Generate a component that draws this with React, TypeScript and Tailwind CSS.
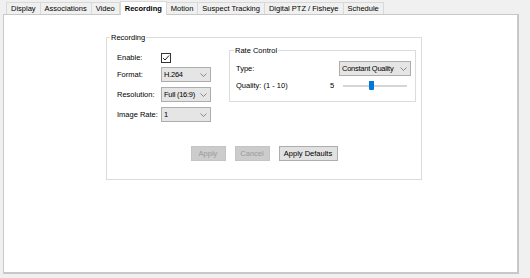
import React from "react";

const font = { fontFamily: '"Liberation Sans", Arial, sans-serif' };

function Tab({ label, active }: { label: string; active?: boolean }) {
  if (active) {
    return (
      <div className="relative z-10 -mb-px flex h-[14px] items-center whitespace-nowrap border border-b-0 border-[#d9d9d9] bg-white px-[4px] text-[7.5px] font-bold text-black">
        {label}
      </div>
    );
  }
  return (
    <div className="-ml-px flex h-[12px] items-center whitespace-nowrap border border-b-0 border-[#d9d9d9] bg-[#f0f0f0] px-[4px] text-[7.5px] text-black first:ml-0">
      {label}
    </div>
  );
}

function Select({ value, w }: { value: string; w: string }) {
  return (
    <div className={`flex h-[15px] items-center justify-between whitespace-nowrap border border-[#adadad] bg-[#e5e5e5] pl-[2px] pr-[3px] text-[7.5px] text-black ${w}`}>
      <span className="tracking-[-0.25px]">{value}</span>
      <svg width="7" height="4" viewBox="0 0 7 4" className="shrink-0">
        <path d="M0.5 0.5 L3.5 3.5 L6.5 0.5" fill="none" stroke="#707070" strokeWidth="0.8" />
      </svg>
    </div>
  );
}

function Row({ label, children }: { label: string; children: React.ReactNode }) {
  return (
    <div className="flex h-[15px] items-center">
      <div className="w-[44px] whitespace-nowrap text-[7.5px] text-black">{label}</div>
      {children}
    </div>
  );
}

function Button({ label, disabled, w }: { label: string; disabled?: boolean; w: string }) {
  return (
    <div
      className={`flex h-[15px] items-center justify-center whitespace-nowrap border text-[7.5px] ${w} ${
        disabled ? "border-[#c4c4c4] bg-[#cccccc] text-[#9a9a9a]" : "border-[#adadad] bg-[#e1e1e1] text-black"
      }`}
    >
      {label}
    </div>
  );
}

export default function App() {
  return (
    <div className="h-[278px] w-[530px] overflow-hidden bg-[#f0f0f0]" style={font}>
      <div className="flex h-[14px] items-end pl-[6px]">
        <Tab label="Display" />
        <Tab label="Associations" />
        <Tab label="Video" />
        <Tab label="Recording" active />
        <Tab label="Motion" />
        <Tab label="Suspect Tracking" />
        <Tab label="Digital PTZ / Fisheye" />
        <Tab label="Schedule" />
      </div>
      <div className="ml-[3px] h-[260px] w-[516px] border border-[#c8c8c8] border-b-2 border-r-2 bg-white pl-[102px] pt-[22px]">
        <div className="relative h-[143px] w-[316px] border border-[#dcdcdc]">
          <div className="absolute -top-[6px] left-[3px] bg-white px-[1px] text-[7.5px] text-black">Recording</div>
          <div className="flex">
            <div className="flex w-[122px] flex-col pl-[10px] pt-[12px]">
              <Row label="Enable:">
                <div className="flex h-[10px] w-[10px] items-center justify-center border border-[#333333] bg-white">
                  <svg width="8" height="8" viewBox="0 0 8 8">
                    <path d="M1 4 L3 6 L7 1.5" fill="none" stroke="#222" strokeWidth="1" />
                  </svg>
                </div>
              </Row>
              <div className="mt-[2px] flex flex-col gap-[5px]">
                <Row label="Format:">
                  <Select value="H.264" w="w-[50px]" />
                </Row>
                <Row label="Resolution:">
                  <Select value="Full (16:9)" w="w-[50px]" />
                </Row>
                <Row label="Image Rate:">
                  <Select value="1" w="w-[50px]" />
                </Row>
              </div>
            </div>
            <div className="pt-[12px]">
              <div className="relative h-[52px] w-[187px] border border-[#dcdcdc] pl-[6px] pt-[10px]">
                <div className="absolute -top-[6px] left-[4px] bg-white px-[1px] text-[7.5px] text-black">Rate Control</div>
                <div className="flex h-[15px] items-center">
                  <div className="w-[103px] text-[7.5px] text-black">Type:</div>
                  <Select value="Constant Quality" w="w-[72px]" />
                </div>
                <div className="mt-[4px] flex h-[12px] items-center">
                  <div className="w-[94px] whitespace-nowrap text-[7.5px] text-black">Quality: (1 - 10)</div>
                  <div className="w-[13px] text-[7.5px] text-black">5</div>
                  <div className="relative h-[12px] w-[64px]">
                    <div className="absolute left-0 right-0 top-[5px] h-[2px] bg-[#d6d6d6]" />
                    <div className="absolute left-[26px] top-[1px] h-[9px] w-[5px] rounded-b-[1px] bg-[#0078d7]" />
                  </div>
                </div>
              </div>
            </div>
          </div>
          <div className="mt-[24px] flex justify-center gap-[9px]">
            <Button label="Apply" disabled w="w-[35px]" />
            <Button label="Cancel" disabled w="w-[35px]" />
            <Button label="Apply Defaults" w="w-[59px]" />
          </div>
        </div>
      </div>
    </div>
  );
}
